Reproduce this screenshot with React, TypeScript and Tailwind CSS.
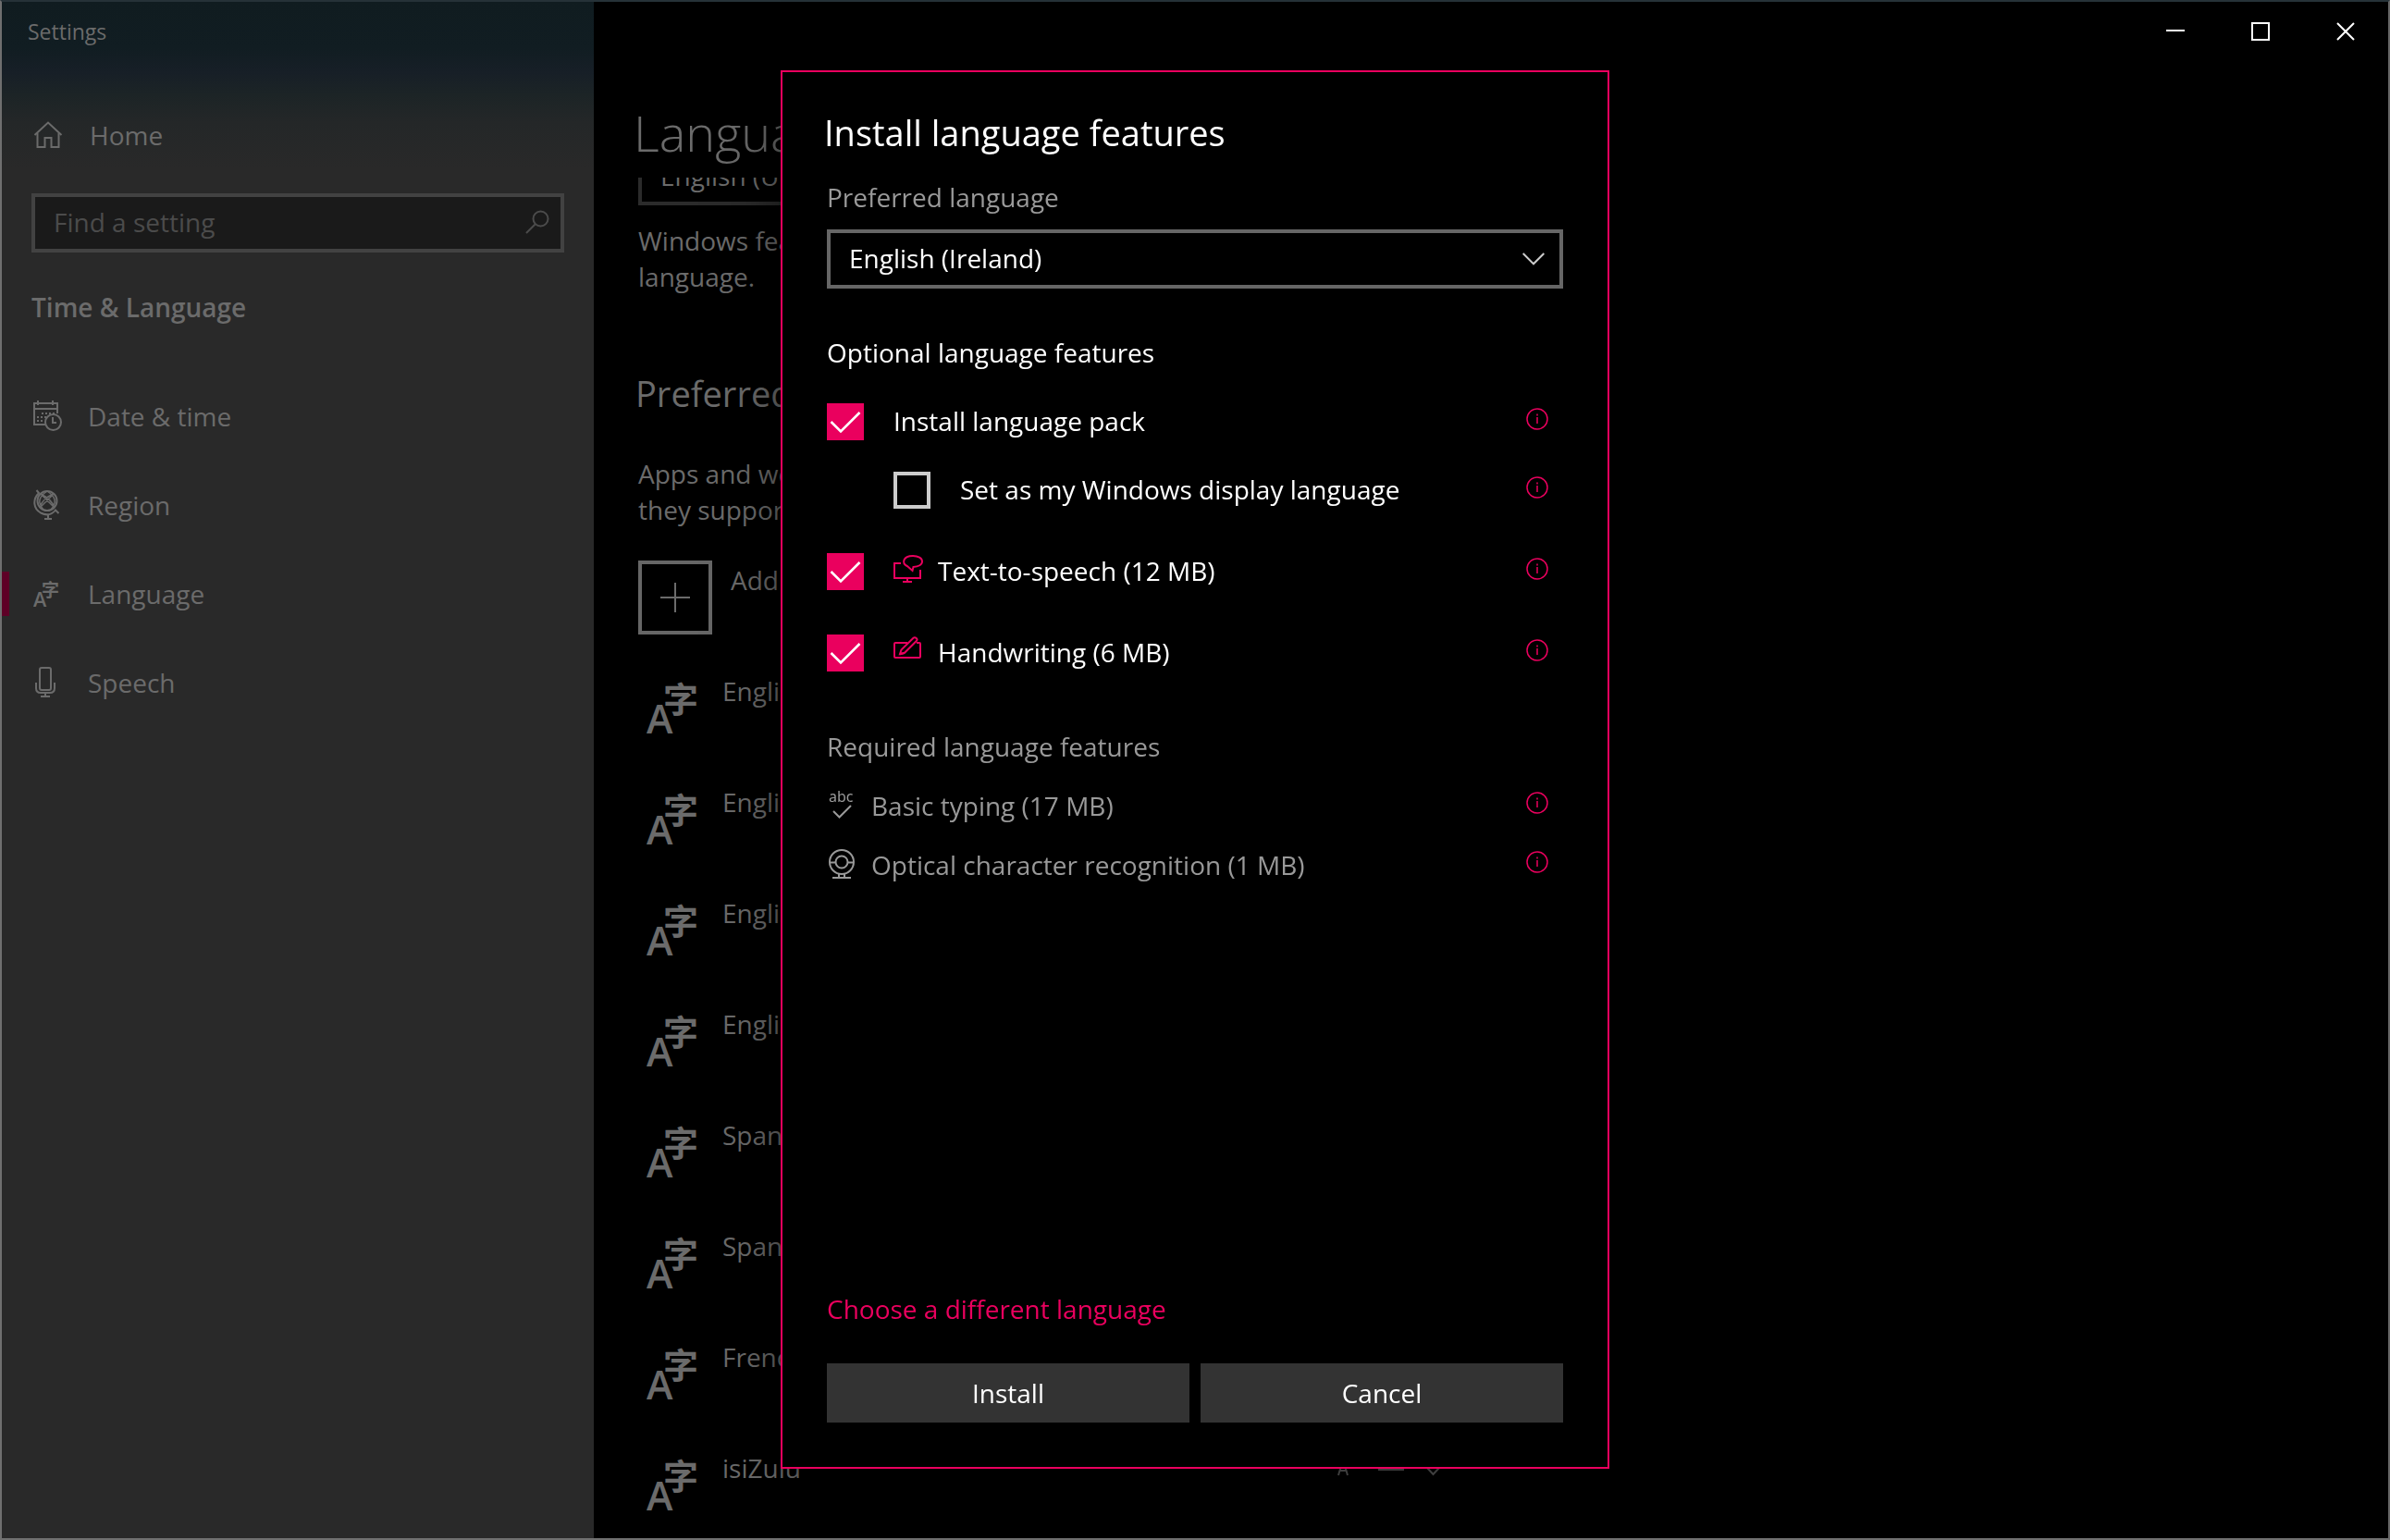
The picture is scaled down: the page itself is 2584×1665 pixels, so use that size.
import type { ReactNode } from "react";
import { useState } from "react";

interface NavEntry {
  label: string;
  icon: ReactNode;
  active?: boolean;
}

function HomeIcon() {
  return (
    <svg width="32" height="32" viewBox="0 0 32 32" fill="none" stroke="currentColor" strokeWidth="2">
      <path d="M1.5 16 16 2.5 30.500 16" />
      <path d="M4.500 14V29H12.500V19H19.500V29H27.500V14" />
    </svg>
  );
}

function SearchIcon() {
  return (
    <svg width="26" height="26" viewBox="0 0 26 26" fill="none" stroke="currentColor" strokeWidth="2">
      <circle cx="16.500" cy="9.500" r="8" />
      <path d="M10.800 15.200 1 25" />
    </svg>
  );
}

function DateTimeIcon() {
  return (
    <svg width="32" height="34" viewBox="0 0 32 34" fill="none" stroke="currentColor" strokeWidth="2">
      <path d="M13 26H1V3H26V14M1 9H26M5 0V5M21 0V5" />
      <path d="M9 14H24M4 18H15M4 22H12" strokeDasharray="2 2" />
      <circle cx="21.500" cy="23.500" r="8.500" />
      <path d="M21 18V24H25" />
    </svg>
  );
}

function RegionIcon() {
  return (
    <svg width="32" height="34" viewBox="0 0 32 34" fill="none" stroke="currentColor" strokeWidth="2">
      <circle cx="15" cy="12.500" r="10.500" />
      <path d="M3.500 1 6 4C-1 11 0 21 8 25.500C14 28.500 20 27.500 24 22.500L27.500 26M16 27V31M12 32H20" />
      <path d="M8 5 23 20M22 5 7 20M8 5C14 8 21 13 23 20M22 5C14 8 9 13 7 20M15 2C24 8 26 14 19 22M15 2C6 8 4 14 11 22" strokeWidth="1.500" />
    </svg>
  );
}

function MicIcon() {
  return (
    <svg width="32" height="34" viewBox="0 0 32 34" fill="none" stroke="currentColor" strokeWidth="2">
      <rect x="7" y="1" width="12" height="24" rx="2" />
      <path d="M3 17V23Q3 28 8 28H18Q23 28 23 23V17M13 28V32M8 32H18" />
    </svg>
  );
}

function LanguageIcon({ size }: { size: number }) {
  return (
    <svg width={size} height={size} viewBox="0 0 56 56" fill="currentColor" aria-hidden="true">
      <text x="0" y="56" fontSize="43" fontWeight="600" fontFamily="'Open Sans', sans-serif">
        A
      </text>
      <text x="18" y="33" fontSize="38" fontWeight="700" fontFamily="'Noto Sans CJK SC', sans-serif">
        字
      </text>
    </svg>
  );
}

function InfoIcon() {
  return (
    <svg width="24" height="24" viewBox="0 0 24 24" fill="none" stroke="currentColor" strokeWidth="1.500">
      <circle cx="12" cy="12" r="11" />
      <path d="M12 10V17M12 6.500V8.500" />
    </svg>
  );
}

function SpeechIcon() {
  return (
    <svg width="32" height="32" viewBox="0 0 32 32" fill="none" stroke="currentColor" strokeWidth="2">
      <path d="M8 9H1V25H29V16M15 25V29M10 29H20" />
      <path d="M15.500 12.500C8 9 10.500 1 21 1C26.500 1 31 3.600 31 7C31 10.500 27 12.700 21.500 12.900L20.500 17Z" />
    </svg>
  );
}

function HandwritingIcon() {
  return (
    <svg width="32" height="26" viewBox="0 0 32 26" fill="none" stroke="currentColor" strokeWidth="2">
      <path d="M15 7H2Q1 7 1 8V22Q1 23 2 23H28Q29 23 29 22V8Q29 7 28 7H25" />
      <path d="M7 19 8.500 14.500 21.500 1.800Q23 .500 24.700 2T24.800 5L12 17.800Z" />
      <path d="M6.500 19.500 12 18" />
    </svg>
  );
}

function TypingIcon() {
  return (
    <svg width="30" height="34" viewBox="0 0 30 34" fill="none" aria-hidden="true">
      <text x="2" y="13" fontSize="16" fill="currentColor" fontFamily="'Noto Sans', sans-serif">
        abc
      </text>
      <path d="M7 23 13.500 29.500 26 17" stroke="currentColor" strokeWidth="2" />
    </svg>
  );
}

function CameraIcon() {
  return (
    <svg width="30" height="34" viewBox="0 0 30 34" fill="none" stroke="currentColor" strokeWidth="2">
      <circle cx="16" cy="14" r="13" />
      <circle cx="16" cy="14" r="6.500" />
      <path d="M3 14.500H9.500M22.500 14.500H29M13 27V31M19 27V31M6 31H26" />
    </svg>
  );
}

// display / keyboard / speech markers at the end of a language row
function RowMarkers() {
  return (
    <svg width="112" height="30" viewBox="0 0 112 30" fill="none" stroke="currentColor" strokeWidth="2">
      <path d="M1 29 6 12 11 29M3 24H9" />
      <path d="M45 6H71V23H45Z" />
      <path d="M97 21 103.500 28 110 21" />
    </svg>
  );
}

const NAV: NavEntry[] = [
  { label: "Date & time", icon: <DateTimeIcon /> },
  { label: "Region", icon: <RegionIcon /> },
  { label: "Language", icon: <LanguageIcon size={28} />, active: true },
  { label: "Speech", icon: <MicIcon /> },
];

const LANGUAGES = [
  "English (United States)",
  "English (United Kingdom)",
  "English (Canada)",
  "English (Australia)",
  "Spanish (Mexico)",
  "Spanish (Spain)",
  "French (France)",
  "isiZulu",
];

function Sidebar() {
  return (
    <aside className="flex w-[640px] shrink-0 flex-col bg-[linear-gradient(#101c20_0px,#111d22_50px,#171f27_76px,#1c2426_100px,#242728_130px,#292929_180px)]">
      <div className="flex h-16 items-center px-[28px] text-[23px]">Settings</div>
      <a href="#home" className="mt-8 flex h-24 items-center gap-[29px] pl-[34px]">
        <HomeIcon />
        Home
      </a>
      <div className="mt-[15px] ml-8 flex h-16 w-[576px] items-center border-4 border-[#424242] bg-[#1a1a1a] pr-3 pb-0.5 pl-5 text-[#4b4b4b]">
        <input
          type="text"
          aria-label="Find a setting"
          placeholder="Find a setting"
          className="min-w-0 flex-1 bg-transparent outline-none placeholder:text-[#4b4b4b]"
        />
        <SearchIcon />
      </div>
      <h2 className="mt-[39px] pl-8 leading-10 font-semibold">Time &amp; Language</h2>
      <nav className="mt-[50px]">
        {NAV.map(({ label, icon, active }) => (
          <a key={label} href="#" className="flex h-24 items-center">
            <span className={active ? "h-12 w-2 bg-[#5e0026]" : "h-12 w-2"} />
            <span className="ml-[26px] flex w-[59px]">{icon}</span>
            {label}
          </a>
        ))}
      </nav>
    </aside>
  );
}

function LanguagePage() {
  return (
    <main className="flex min-w-0 flex-1 flex-col">
      <div className="flex h-16 shrink-0 justify-end text-white">
        <button type="button" aria-label="Minimize" className="flex w-[92px] items-center justify-center">
          <svg width="20" height="20" viewBox="0 0 20 20" stroke="currentColor" strokeWidth="2">
            <path d="M0 9H20" />
          </svg>
        </button>
        <button type="button" aria-label="Maximize" className="flex w-[92px] items-center justify-center">
          <svg width="20" height="20" viewBox="0 0 20 20" fill="none" stroke="currentColor" strokeWidth="2">
            <path d="M1 1H19V19H1Z" />
          </svg>
        </button>
        <button type="button" aria-label="Close" className="flex w-[92px] items-center justify-center">
          <svg width="20" height="20" viewBox="0 0 20 20" stroke="currentColor" strokeWidth="2">
            <path d="M1 1 19 19M19 1 1 19" />
          </svg>
        </button>
      </div>
      <h1 className="mt-[45px] mb-[17px] shrink-0 pl-[43px] text-[54px] leading-[64px] font-light">Language</h1>

      <div className="min-h-0 flex-1 overflow-hidden pl-12">
        <div className="-mt-[34px] w-[900px]">
          <select
            aria-label="Windows display language"
            className="h-16 w-[800px] appearance-none border-4 border-[#2b2b2b] bg-black px-5"
          >
            <option>English (United States)</option>
          </select>
          <p className="mt-[19px] leading-[39px]">
            Windows features like Settings will appear in this
            <br />
            language.
          </p>
          <h2 className="mt-[82px] -ml-[3px] text-[38px] leading-[48px]">Preferred languages</h2>
          <p className="mt-11 leading-[39px]">
            Apps and websites will appear in the first language
            <br />
            they support.
          </p>
          <button type="button" className="mt-[35px] flex h-20 items-start gap-5">
            <span className="flex size-20 items-center justify-center border-4 border-[#666]">
              <svg width="32" height="32" viewBox="0 0 32 32" stroke="currentColor" strokeWidth="2">
                <path d="M0 16H32M16 0V32" />
              </svg>
            </span>
            <span className="leading-[42px]">Add a preferred language</span>
          </button>
          <ul className="mt-10">
            {LANGUAGES.map((name) => (
              <li key={name} className="flex h-[120px] items-start pl-[9px]">
                <span className="mt-[11px] w-[82px] shrink-0">
                  <LanguageIcon size={56} />
                </span>
                <span className="w-[665px] shrink-0 leading-[42px]">{name}</span>
                <span className="shrink-0 text-[#555]">
                  <RowMarkers />
                </span>
              </li>
            ))}
          </ul>
        </div>
      </div>
    </main>
  );
}

interface FeatureCheckProps {
  label: string;
  icon?: ReactNode;
  checked: boolean;
  onChange: () => void;
}

function FeatureCheck({ label, icon, checked, onChange }: FeatureCheckProps) {
  return (
    <div className="flex h-10 items-center">
      <label className="flex flex-1 items-center leading-[38px]">
        <span className="mr-8 grid size-10">
          <input
            type="checkbox"
            checked={checked}
            onChange={onChange}
            className="col-start-1 row-start-1 size-10 appearance-none border-4 border-[#ccc] checked:border-[#ea005e] checked:bg-[#ea005e]"
          />
          {checked && (
            <svg
              className="pointer-events-none col-start-1 row-start-1"
              width="40"
              height="40"
              viewBox="0 0 40 40"
              fill="none"
              stroke="#fff"
              strokeWidth="2.600"
            >
              <path d="M4.500 20 15 30.500 35.500 10" />
            </svg>
          )}
        </span>
        {icon && <span className="flex h-9 w-12 text-[#ea005e]">{icon}</span>}
        <span className="pb-0.5">{label}</span>
      </label>
      <InfoButton label={label} />
    </div>
  );
}

function InfoButton({ label }: { label: string }) {
  return (
    <button type="button" aria-label={`About ${label}`} className="mr-4 mb-1.5 text-[#ea005e]">
      <InfoIcon />
    </button>
  );
}

function RequiredFeature({ label, icon }: { label: string; icon: ReactNode }) {
  return (
    <li className="flex h-16 items-center">
      <span className="w-12">{icon}</span>
      <span className="flex-1">{label}</span>
      <InfoButton label={label} />
    </li>
  );
}

function InstallDialog() {
  const [picked, setPicked] = useState({ pack: true, display: false, tts: true, ink: true });
  const toggle = (key: keyof typeof picked) => setPicked({ ...picked, [key]: !picked[key] });

  return (
    <div
      role="dialog"
      aria-labelledby="dialog-title"
      className="flex w-full max-w-[896px] flex-col border-2 border-[#ea005e] bg-black px-12 pb-12 text-white shadow-[0_0_60px_rgba(0,0,0,0.6)]"
    >
      <h2 id="dialog-title" className="mt-[41px] -ml-[3px] text-[38px] leading-[48px]">
        Install language features
      </h2>
      <label htmlFor="preferred" className="mt-[26px] leading-10 text-[#999]">
        Preferred language
      </label>
      <div className="mt-[15px] grid">
        <select
          id="preferred"
          className="col-start-1 row-start-1 h-16 w-full appearance-none border-4 border-[#666] bg-black px-5 pb-0.5"
        >
          <option>English (Ireland)</option>
        </select>
        <svg
          className="pointer-events-none col-start-1 row-start-1 mr-5 self-center justify-self-end"
          width="24"
          height="14"
          viewBox="0 0 24 14"
          fill="none"
          stroke="#ccc"
          strokeWidth="2"
        >
          <path d="M.700 1 12 12.300 23.300 1" />
        </svg>
      </div>

      <h3 className="mt-[49px] leading-10">Optional language features</h3>
      <div className="mt-[35px] flex flex-col">
        <FeatureCheck label="Install language pack" checked={picked.pack} onChange={() => toggle("pack")} />
        <div className="mt-[34px] pl-[72px]">
          <FeatureCheck
            label="Set as my Windows display language"
            checked={picked.display}
            onChange={() => toggle("display")}
          />
        </div>
        <div className="mt-12 flex flex-col gap-12">
          <FeatureCheck
            label="Text-to-speech (12 MB)"
            icon={<SpeechIcon />}
            checked={picked.tts}
            onChange={() => toggle("tts")}
          />
          <FeatureCheck
            label="Handwriting (6 MB)"
            icon={<HandwritingIcon />}
            checked={picked.ink}
            onChange={() => toggle("ink")}
          />
        </div>
      </div>

      <div className="mt-[61px] text-[#999]">
        <h3 className="leading-10">Required language features</h3>
        <ul className="mt-3">
          <RequiredFeature label="Basic typing (17 MB)" icon={<TypingIcon />} />
          <RequiredFeature label="Optical character recognition (1 MB)" icon={<CameraIcon />} />
        </ul>
      </div>

      <a href="#languages" className="mt-auto self-start leading-10 text-[#ea005e]">
        Choose a different language
      </a>
      <div className="mt-[39px] grid grid-cols-2 gap-3">
        <button type="button" className="h-16 bg-[#333]">
          Install
        </button>
        <button type="button" className="h-16 bg-[#333]">
          Cancel
        </button>
      </div>
    </div>
  );
}

export default function App() {
  return (
    <div className="flex h-screen overflow-hidden border-2 border-t-[#263238] border-r-[#666] border-b-[#707070] border-l-[#6f6f6f] bg-black font-['Open_Sans','Noto_Sans',sans-serif] text-[28px] text-[#6b6b6b]">
      <Sidebar />
      <LanguagePage />
      <div className="pointer-events-none fixed inset-0 flex justify-center pt-[76px] pb-[77px] *:pointer-events-auto">
        <InstallDialog />
      </div>
    </div>
  );
}
